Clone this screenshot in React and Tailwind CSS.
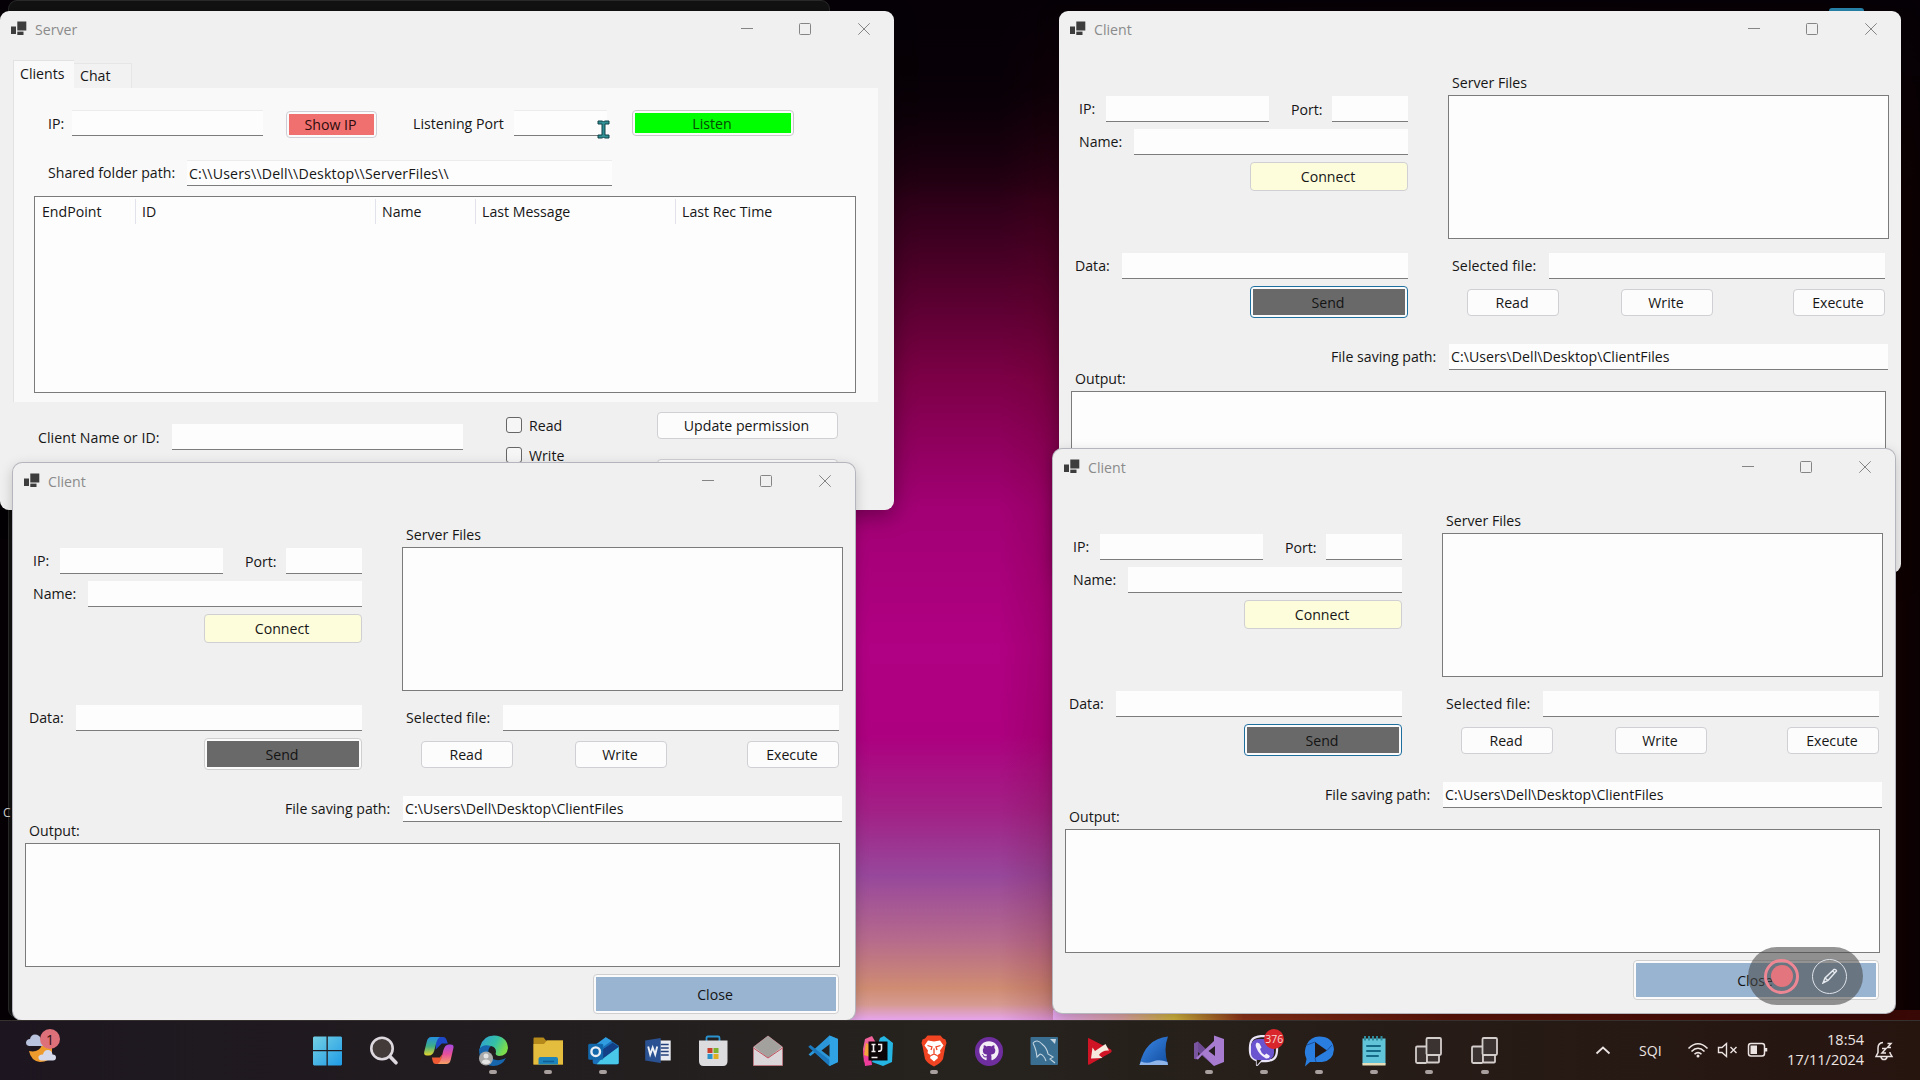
import React from "react";
import { FaGithub, FaViber } from "react-icons/fa";

const FormIcon = () => (
  <svg width="16" height="15" viewBox="0 0 16 15" className="shrink-0">
    <rect x="0" y="5.5" width="5" height="7.5" fill="#3d3d3d" />
    <rect x="6.3" y="0.5" width="9" height="9" fill="#3d3d3d" />
    <rect x="6.3" y="10.6" width="6.2" height="3.4" fill="#3d3d3d" />
  </svg>
);

const TitleBar = ({ title }) => (
  <div className="flex h-[36px] shrink-0 items-start pt-[10px] pl-[11px] pr-[24px]">
    <FormIcon />
    <span className="-mt-px ml-[8px] flex-1 leading-[19px] text-[#8b8b8b]">{title}</span>
    <svg width="129" height="12" viewBox="0 0 129 12" className="mt-[2px] shrink-0" fill="none" stroke="#858585" strokeWidth="1">
      <path d="M0 5.5H12" />
      <rect x="58.5" y="0.5" width="11" height="11" rx="1" />
      <path d="M117.3 0.3L128.7 11.7M128.7 0.3L117.3 11.7" />
    </svg>
  </div>
);

const Field = ({ className, children }) => (
  <div className={"flex h-[26px] shrink-0 items-center border-b border-[#7c7c7c] bg-[#fdfdfd] pl-[2px] tracking-[0.03px] whitespace-pre " + className}>{children}</div>
);

const Btn = ({ className, children }) => (
  <div className={"flex shrink-0 items-center justify-center rounded-[4px] border border-[#cfcfd4] pr-[2px] " + className}>{children}</div>
);

const FilledBtn = ({ className, fill, children }) => (
  <div className={"flex shrink-0 rounded-[4px] border bg-[#fbfbfb] p-[2px] " + className}>
    <div className={"flex flex-1 items-center justify-center pr-[2px] " + fill}>{children}</div>
  </div>
);

const frame = "absolute flex flex-col overflow-hidden rounded-[9px] bg-[#f0f0f0] ";

function Client({ className, focused, tail }) {
  return (
    <div className={frame + "w-[842px] " + className}>
      <TitleBar title="Client" />
      <div className="flex">
        <div className="flex w-[349px] shrink-0 flex-col pt-[49px]">
          <div className="flex h-[26px] items-center">
            <span className="ml-[20px] w-[27px] pb-[2px]">IP:</span>
            <Field className="w-[163px]" />
            <span className="ml-[22px] w-[41px]">Port:</span>
            <Field className="w-[76px]" />
          </div>
          <div className="mt-[7px] flex h-[26px] items-center">
            <span className="ml-[20px] w-[55px] pb-[2px]">Name:</span>
            <Field className="w-[274px]" />
          </div>
          <Btn className="mt-[7px] ml-auto h-[29px] w-[158px] bg-[#fdfddc]">Connect</Btn>
          <div className="mt-[62px] flex h-[26px] items-center">
            <span className="ml-[16px] w-[47px] pb-[2px]">Data:</span>
            <Field className="w-[286px]" />
          </div>
          <FilledBtn className={"mt-[7px] ml-auto h-[32px] w-[158px] " + (focused ? "border-[#1f6f9f]" : "border-[#cfcfcf]")} fill="bg-[#696969] text-[#141414]">Send</FilledBtn>
        </div>
        <div className="ml-[40px] flex w-[441px] flex-col pt-[27px]">
          <span className="ml-[4px] leading-[18px]">Server Files</span>
          <div className="mt-[3px] h-[144px] border border-[#7b7b7b] bg-[#fdfdfd]" />
          <div className="mt-[14px] flex h-[26px] items-center">
            <span className="ml-[4px] w-[97px] pb-[2px] tracking-[0.1px]">Selected file:</span>
            <Field className="w-[336px]" />
          </div>
          <div className="mt-[10px] flex h-[27px]">
            <Btn className="ml-[19px] w-[92px] bg-[#fcfcfc]">Read</Btn>
            <Btn className="ml-[62px] w-[92px] bg-[#fcfcfc]">Write</Btn>
            <Btn className="ml-[80px] w-[92px] bg-[#fcfcfc]">Execute</Btn>
          </div>
        </div>
      </div>
      <div className="mt-[26px] flex h-[26px] shrink-0 items-center">
        <span className="ml-[272px] w-[118px] pb-[2px]">File saving path:</span>
        <Field className="w-[439px]">C:\Users\Dell\Desktop\ClientFiles</Field>
      </div>
      <span className="ml-[16px] leading-[18px]">Output:</span>
      <div className="mt-[3px] ml-[12px] h-[124px] w-[815px] shrink-0 border border-[#7b7b7b] bg-[#fdfdfd]" />
      {tail && (
        <FilledBtn className="mt-[7px] ml-[580px] h-[40px] w-[246px] border-[#cfcfcf]" fill="bg-[#99b4d1] text-[#141414]">Close</FilledBtn>
      )}
    </div>
  );
}

const Check = ({ children, className }) => (
  <div className={"flex h-[16px] items-center " + className}>
    <div className="h-[16px] w-[16px] rounded-[3px] border border-[#666] bg-[#f6f6f6]" />
    <span className="ml-[7px] pt-px leading-[16px]">{children}</span>
  </div>
);

function Server() {
  return (
    <div className={frame + "top-[11px] left-0 h-[499px] w-[894px] shadow-[0_6px_22px_rgba(0,0,0,0.350)]"}>
      <TitleBar title="Server" />
      <div className="mt-[13px] ml-[13px] flex h-[28px] shrink-0 items-end">
        <div className="flex h-[28px] w-[61px] items-start border-t border-l border-[#e2e2e2] bg-[#f9f9f9] pt-[3px] pl-[6px]">Clients</div>
        <div className="flex h-[25px] w-[58px] items-start border-t border-r border-[#e6e6e6] bg-[#f2f2f2] pt-[2px] pl-[6px]">Chat</div>
      </div>
      <div className="ml-[13px] flex h-[314px] w-[865px] shrink-0 flex-col border-l border-[#e2e2e2] bg-[#f9f9f9] pt-[22px]">
        <div className="flex h-[27px] items-start">
          <span className="ml-[34px] w-[24px] pt-[4px]">IP:</span>
          <Field className="w-[191px] border-t border-t-[#ececec]" />
          <FilledBtn className="mt-px ml-[23px] h-[27px] w-[91px] border-[#cfcfd8]" fill="bg-[#f07070] text-[#2c0c0c]">Show IP</FilledBtn>
          <span className="ml-[36px] w-[101px] pt-[4px]">Listening Port</span>
          <Field className="w-[93px] border-t border-t-[#ececec]" />
          <FilledBtn className="ml-[25px] h-[26px] w-[162px] border-[#c9c9c9]" fill="bg-[#00ff00] text-[#064a06]">Listen</FilledBtn>
        </div>
        <div className="mt-[23px] flex h-[26px] items-center">
          <span className="ml-[34px] w-[139px] pb-px">Shared folder path:</span>
          <Field className="w-[425px] border-t border-t-[#ececec] tracking-[0.17px]">{"C:\\\\Users\\\\Dell\\\\Desktop\\\\ServerFiles\\\\"}</Field>
        </div>
        <div className="mt-[10px] ml-[20px] h-[197px] w-[822px] shrink-0 border border-[#7b7b7b] bg-[#fdfdfd]">
          <div className="mt-[2px] flex h-[25px] leading-[25px]">
            <span className="w-[101px] border-r border-[#e2e2ea] pl-[7px]">EndPoint</span>
            <span className="w-[240px] border-r border-[#e2e2ea] pl-[6px]">ID</span>
            <span className="w-[100px] border-r border-[#e2e2ea] pl-[6px]">Name</span>
            <span className="w-[200px] border-r border-[#e2e2ea] pl-[6px]">Last Message</span>
            <span className="pl-[6px]">Last Rec Time</span>
          </div>
        </div>
      </div>
      <div className="flex">
        <div className="mt-[22px] flex h-[26px] items-center">
          <span className="ml-[38px] w-[134px] tracking-[0.06px]">Client Name or ID:</span>
          <Field className="w-[291px]" />
        </div>
        <div className="ml-[43px] w-[151px] pt-[15px]">
          <Check>Read</Check>
          <Check className="mt-[14px]">Write</Check>
        </div>
        <div className="pt-[10px]">
          <Btn className="h-[27px] w-[181px] bg-[#fcfcfc]">Update permission</Btn>
          <Btn className="mt-[20px] h-[27px] w-[181px] bg-[#fcfcfc]" />
        </div>
      </div>
    </div>
  );
}

const Svg = ({ children }) => (
  <svg width="32" height="32" viewBox="0 0 32 32" fill="none">{children}</svg>
);

const FormsTask = () => (
  <Svg>
    <g stroke="#d3cdcb" strokeWidth="1.8" fill="#3a3331">
      <rect x="3" y="11.5" width="11" height="16.5" rx="1.2" />
      <rect x="13.5" y="3" width="14.5" height="17" rx="1.2" />
      <rect x="14" y="20" width="12" height="7.5" rx="1" />
    </g>
  </Svg>
);

const apps = [
  ["start", <Svg><defs><linearGradient id="wn" x1="0" y1="0" x2="1" y2="1"><stop offset="0" stopColor="#74d0e4" /><stop offset="1" stopColor="#1f9be6" /></linearGradient></defs>
    <path fill="url(#wn)" d="M2 1.500H14.500V15H1V2.500ZM15.800 1.500H29L30 2.500V15H15.800ZM1 16.300H14.500V30.500H2L1 29.500ZM15.800 16.300H30V29.500L29 30.500H15.800Z" /></Svg>],
  ["search", <Svg><circle cx="15" cy="13.5" r="10.7" fill="#423b3a" stroke="#ddd8de" strokeWidth="2.6" /><path d="M23 21.5L29 27.8" stroke="#ddd8de" strokeWidth="3.6" strokeLinecap="round" /></Svg>],
  ["copilot", <Svg><defs>
    <linearGradient id="c1" x1="0" y1="0" x2="0" y2="1"><stop offset="0" stopColor="#2590e0" /><stop offset="0.5" stopColor="#3fae86" /><stop offset="1" stopColor="#e4d52a" /></linearGradient>
    <linearGradient id="c2" x1="0" y1="0" x2="0" y2="1"><stop offset="0" stopColor="#a54ae0" /><stop offset="0.5" stopColor="#e8509a" /><stop offset="1" stopColor="#f5a165" /></linearGradient></defs>
    <g transform="translate(0.8 -0.5)">
    <path d="M13 2.5H20.5Q23 2.5 24 6L25 9H19L13 15Z" fill="#1d48c8" />
    <path d="M9 23H17L19 20V29.5H13Q10.500 29.500 10 27Z" fill="#ee5a34" />
    <path d="M8.500 2.500H17Q14.500 4 13.500 8L11.500 16Q10 21 6 21H4Q0.500 21 1.500 17L4 7Q5 2.500 8.500 2.500Z" fill="url(#c1)" />
    <path d="M23.500 29.500H15Q17.500 28 18.500 24L20.500 16Q22 10 26 10H28Q31.500 10 30.500 14L28 25Q27 29.500 23.500 29.500Z" fill="url(#c2)" />
    </g></Svg>],
  ["edge", <Svg><defs><linearGradient id="eg" x1="0" y1="0" x2="1" y2="0.4"><stop offset="0" stopColor="#2f9fd8" /><stop offset="0.6" stopColor="#35c1a4" /><stop offset="1" stopColor="#7bdc4c" /></linearGradient></defs>
    <path d="M3 12Q6 0.500 17 0.500Q30 1 31 13Q30 21 22 21Q17.500 20.500 19 17Q19 12 14 11Q7 10 3 17Z" fill="url(#eg)" />
    <path d="M2 14Q6 8.500 14 11Q10 14 12 20Q15 26 23 25Q26 24.500 29 23Q25 31 16 31Q2 30 2 14Z" fill="#1766ad" />
    <circle cx="9" cy="23.500" r="7" fill="#a9a9a9" /><circle cx="9" cy="21" r="2.500" fill="#e4e4e4" /><path d="M4.500 27.500Q5.500 24.500 9 24.500T13.500 27.500Q9 31 4.500 27.500Z" fill="#e4e4e4" /></Svg>],
  ["files", <Svg><path d="M1.500 3.500Q1.500 2.500 2.500 2.500H11.500L14 5.500H31V29.500H1.500Z" fill="#b58a1a" /><path d="M1.500 9H12L15 5.500H31V29.500H1.500Z" fill="#e5bd3e" /><path d="M6.500 29.500V24Q6.500 22 8.500 22H24Q26 22 26 24V29.500Z" fill="#1d83bb" /><path d="M11 26.500H22" stroke="#0d5f94" strokeWidth="1.500" /></Svg>],
  ["outlook", <Svg><g transform="translate(0.7 -0.3)"><path d="M5 12L18 2.500L31 11V28Q31 29.500 29 29.500H8Q5 29.500 5 27Z" fill="#1a6fb8" /><path d="M8 10L18 2.500L24 6L10 16Z" fill="#2f9de0" /><path d="M14 24L31 12V28Q31 29.500 29 29.500H9Z" fill="#49c8ea" /><path d="M10 18L25 8L31 12L15 24Z" fill="#123f86" /><rect x="0.500" y="9" width="15" height="16" rx="1.500" fill="#1267ab" /><circle cx="8" cy="17" r="4.300" stroke="#e9eef4" strokeWidth="2.400" /></g></Svg>],
  ["word", <Svg><g transform="translate(0.7 -0.5)"><rect x="12" y="6" width="16" height="20" fill="#e8ebf1" /><path d="M18 10H26M18 13.500H26M18 17H26M18 20.500H26" stroke="#23407a" strokeWidth="1.600" /><path d="M2.500 6L18 3.500V28.500L2.500 26Z" fill="#2a5293" /><path d="M5.500 12L7.500 20L10 13L12.500 20L14.500 12" stroke="#eef1f6" strokeWidth="1.900" /></g></Svg>],
  ["store", <Svg><path d="M9.500 8V3Q9.500 1.500 11 1.500H21Q22.500 1.500 22.500 3V8" stroke="#2a93d0" strokeWidth="1.800" /><path d="M2 5.500H30.500V26Q30.500 31 26 31H6.500Q2 31 2 26Z" fill="#dcdcdf" /><rect x="10.500" y="13" width="5" height="5" fill="#c8402c" /><rect x="16.500" y="13" width="5" height="5" fill="#7cb02f" /><rect x="10.500" y="19" width="5" height="5" fill="#2b93c9" /><rect x="16.500" y="19" width="5" height="5" fill="#dfae22" /></Svg>],
  ["mail", <Svg><path d="M1.500 12L16 1L30.500 12V30.500H1.500Z" fill="#dbd6d9" stroke="#c77a84" strokeWidth="0.800" /><path d="M2 12L16 1L30 12L16 23Z" fill="#a3a19e" /><path d="M1.500 13L16 23L30.500 13" stroke="#c2525f" strokeWidth="1" /></Svg>],
  ["code", <Svg><path d="M22.500 0.500L31 4V27L22.500 31L8 17.500L3.500 21L1.500 19.500L22.500 0.500Z" fill="#2b97d8" /><path d="M1.500 11.500L3.500 10L22.500 25V31L1.500 12Z" fill="#1c79bd" /><path d="M23 9V22L14.500 15.500Z" fill="#23211f" /><path d="M22.500 0.500L31 4V27L22.500 31Z" fill="#2fa3e3" /></Svg>],
  ["idea", <Svg><path d="M3 4L10 1L14 8L8 14L2 28L1 14Z" fill="#f0609a" /><path d="M1 16L8 14L10 30L3 31Z" fill="#ee3c9b" /><path d="M4 8L8 10V22L2 20Z" fill="#f3a43c" /><path d="M18 3L22 1L31 8L30 27L21 31L10 27Z" fill="#25b6e4" /><rect x="6.500" y="6.500" width="19" height="19" fill="#0b0508" /><path d="M9.500 9.500H13.500M11.500 9.500V16.500M9.500 16.500H13.500M16 9.500H19.500V14Q19.500 16.500 16 16.200M9.500 22.500H15.500" stroke="#f2eef0" strokeWidth="1.600" /></Svg>],
  ["brave", <Svg><path d="M9.500 0.500H22.500L25 3.500L27.500 4.500L28.500 8L27.500 11L25 24Q23 28 16 31.500Q9 28 7 24L4.500 11L3.500 8L4.500 4.500L7 3.500Z" fill="#f04423" /><path d="M10 5.500L16 6.500L22 5.500L25.500 10.500L22 15.500L22.500 18L19 20.500L20 23L16 26.500L12 23L13 20.500L9.500 18L10 15.500L6.500 10.500Z" fill="#fff" /><path d="M9.500 10.500L14 12L13 15M22.500 10.500L18 12L19 15M16 13.500V19M13 20.500L16 19L19 20.500" stroke="#f04423" strokeWidth="1.300" /></Svg>],
  ["github", <div className="flex h-[29px] w-[28px] items-center justify-center rounded-full bg-[#6e2e9e]"><FaGithub size={20} color="#f3eef6" /></div>],
  ["mysql", <Svg><rect x="2.500" y="2" width="27.500" height="28" rx="1" fill="#3b6f92" /><path d="M5 8Q9 3.500 14 9Q19 13 20 19L25 22L22 24L27 28M5 8Q7 12 8 16L9 22L12 19Q16 20 18 26" stroke="#c3d5e0" strokeWidth="1.100" /><path d="M22 4L27 9L28 4" fill="#c3d5e0" /></Svg>],
  ["anydesk", <Svg><path d="M5 4Q5 2.500 6.500 3.500L28 14.500Q29.500 16 28 17.500L6.500 29.500Q5 30.500 5 28.500Z" fill="#cf1426" /><path d="M22.500 9L12 16L9.500 12.500L8 23.500L19.500 23L16 20Q19 15 26 15.500Z" fill="#f5ecdf" /></Svg>],
  ["wireshark", <Svg><defs><linearGradient id="ws" x1="0" y1="0" x2="1" y2="1"><stop offset="0" stopColor="#3d8bea" /><stop offset="1" stopColor="#114c9e" /></linearGradient></defs><path d="M1.500 30Q7 4 30 1.500Q25 14 30 30Z" fill="url(#ws)" /><path d="M1.500 30L3 26.500Q9 29 15 26.500T29.500 27L30 30Z" fill="#8eb4e8" /></Svg>],
  ["vs", <Svg><path d="M1 8.500L5 6.500L22 23V30.500L20 30L5 17V21L8 18L3 24.500L1 23.500Z" fill="#6d4a93" /><path d="M1 8.500L5 6.500V24.500L1 23.500Z" fill="#7a559f" /><path d="M21 0.500L31 4V27L21 31L9.500 19.500L5 24.500L3 23L21 6Z" fill="#a77bd0" /><path d="M22 11V21L15.500 16Z" fill="#241c20" /></Svg>],
  ["viber", <div className="relative h-[32px] w-[32px]"><FaViber size={31} color="#e9e4f6" className="absolute inset-0" /><div className="absolute top-[4px] left-[3px] h-[21px] w-[23px] rounded-[7px] bg-[#6a54d0]" /><svg className="absolute inset-0" width="32" height="32" viewBox="0 0 32 32"><path d="M9 7.500Q7 9 8 12Q11 20 18 23.500Q21 24 22 21L18.500 18.500L16.500 20Q13 18 12 14L13.500 12.500L11.500 8.500Z" fill="#f3effb" /></svg><div className="absolute -top-[6px] left-[16px] flex h-[20px] w-[20px] items-center justify-center rounded-full bg-[#d9262c] text-[10.500px] leading-none text-[#f5dcd8]">376</div></div>],
  ["recorder", <Svg><path d="M16 1.500Q30 1.500 31 14.500Q30 26 19 27L7 27L2 31.500L3.500 24Q0 17 4 9Q8 1.500 16 1.500Z" fill="#2a7ee0" /><path d="M12 7L24 15.500L12 23Z" fill="#241815" /><path d="M12 7L4 10M12 23L13 27M24 15.500L29 10" stroke="#1b4f9c" strokeWidth="1" /></Svg>],
  ["notepad", <Svg><rect x="4.500" y="3.500" width="23" height="26" fill="#62c4d8" /><rect x="4.500" y="28" width="23" height="2.500" fill="#e9ddb8" /><path d="M7 1V5.500M11 1V5.500M15 1V5.500M19 1V5.500M23.500 1V5.500" stroke="#2e8b9c" strokeWidth="2" /><path d="M9 11H22M9 16H22M9 21H20" stroke="#146a86" strokeWidth="2" strokeLinecap="round" /></Svg>],
  ["form1", <FormsTask />],
  ["form2", <FormsTask />],
];
const running = ["edge", "files", "outlook", "brave", "vs", "viber", "recorder", "notepad", "form1", "form2"];

function Taskbar() {
  return (
    <div className="absolute top-[1020px] left-0 flex h-[60px] w-[1920px] border-t border-[#36302e] bg-linear-to-r from-[#1d1620] via-[#26231e] to-[#26140f] text-[#ece4e2]">
      <div className="flex w-[300px] shrink-0 pt-[7px] pl-[25px]">
        <svg width="36" height="36" viewBox="0 0 36 36">
          <path d="M4 23Q14 25 17 17Q19 12 27 12V26Q25 34 15 34Q6 33 4 23Z" fill="#ee9b2e" />
          <path d="M4 18Q1 17.500 1 14.500Q1.500 11 5 11Q6 6.500 10 6.500Q14.500 6.500 16 11Q20 11.500 19 18Z" fill="#b9c3dd" />
          <path d="M16 32.500Q13 31.500 13.500 28.500Q15 26 18 26.500Q19 21.500 23.500 22Q27 22.500 27.500 26.500Q31 26.500 31 29.500Q31 32.500 28 32.500Z" fill="#d5d9ea" />
          <circle cx="25" cy="11" r="10" fill="#dd7078" />
          <text x="25" y="16.500" textAnchor="middle" fontSize="14" fill="#2c1010">1</text>
        </svg>
      </div>
      <div className="flex">
        {apps.map(([name, icon]) => (
          <div key={name} className="flex w-[55.100px] flex-col items-center pt-[14px]">
            <div className="flex h-[32px] items-center">{icon}</div>
            {running.includes(name) && <div className="mt-[3px] h-[4px] w-[8px] rounded-full bg-[#a89f9f]" />}
          </div>
        ))}
      </div>
      <div className="ml-[83px] flex items-start pt-[20px]">
        <svg width="16" height="16" viewBox="0 0 16 16" fill="none" stroke="#ece4e2" strokeWidth="1.800" className="mt-[3px]"><path d="M1.500 9.500L8 3.500L14.500 9.500" /></svg>
        <span className="mt-[1px] ml-[28px] w-[48px] leading-[18px]">SQI</span>
        <svg width="22" height="18" viewBox="0 0 22 18" fill="none" stroke="#ece4e2" strokeWidth="1.600"><path d="M1.500 7.500Q11 -2 20.500 7.500M4.500 10.500Q11 4 17.500 10.500M7.500 13.300Q11 9.800 14.500 13.300" /><circle cx="11" cy="15" r="1.500" fill="#ece4e2" stroke="none" /></svg>
        <svg width="22" height="18" viewBox="0 0 22 18" fill="none" stroke="#ece4e2" strokeWidth="1.400" className="ml-[8px]"><path d="M1.500 6.500H5L9.500 2.500V15.500L5 11.500H1.500ZM13.500 6L19.500 12M19.500 6L13.500 12" /></svg>
        <svg width="22" height="18" viewBox="0 0 22 18" fill="none" stroke="#ece4e2" strokeWidth="1.500" className="ml-[8px]"><rect x="1.500" y="2.500" width="16" height="12.500" rx="2.500" /><rect x="3.500" y="4.500" width="6.500" height="8.500" fill="#ece4e2" stroke="none" /><path d="M19 7V10.500" strokeWidth="2.500" /></svg>
        <div className="-mt-[11px] ml-[13px] w-[82px] text-right text-[14.500px] leading-[20px]">18:54<br />17/11/2024</div>
        <svg width="20" height="20" viewBox="0 0 20 20" fill="none" stroke="#ece4e2" strokeWidth="1.500" className="ml-[10px]"><path d="M9 1.500Q4 2 4 7V11.500L2 15.500H18L16 12V11M7 16Q7.500 18.500 10 18.500T13 16M8 7.500H12L8 12H12M13.500 2.500H17L13.500 6.500H17" /></svg>
      </div>
    </div>
  );
}

export default function App() {
  return (
    <div className='relative h-[1080px] w-[1920px] overflow-hidden bg-[#050005] font-["Open_Sans",sans-serif] text-[14.150px] leading-[19px] whitespace-nowrap text-[#161616]'>
      <div className="absolute inset-0 bg-[linear-gradient(180deg,#060006_0%,#0a0006_8%,#260014_17%,#4c0028_25%,#7c0046_35%,#a20074_47%,#b00083_60%,#ad0080_68%,#a22086_75%,#97479b_81%,#b66a8c_87%,#cf8c72_91.500%,#d69a90_93%,#e6a5f0_94.500%)]" />
      <div className="absolute inset-0 bg-[linear-gradient(90deg,#050005_0%,#050005_2%,transparent_10%,transparent_52%,#60001a33_55%,#400008dd_75%,#1c0002_97%,#0a0002_100%)]" />
      <div className="absolute top-0 left-0 h-[200px] w-[1920px] bg-[linear-gradient(180deg,#060006,transparent)]" />
      <div className="absolute top-[1010px] left-[1053px] h-[10px] w-[867px] bg-[linear-gradient(90deg,#e2a4ea_0%,#d9a0a0_8%,#cdb03c_14%,#8a3018_22%,#5c1408_45%,#380806_100%)]" />
      <div className="absolute top-0 left-[8px] h-[1018px] w-[822px] rounded-[9px] border border-[#2a2a2a] bg-[#121212]" />
      <div className="absolute top-[803px] left-[3px] text-[12px] text-[#d0d0d0]">C</div>
      <div className="absolute top-[8px] left-[1829px] h-[8px] w-[35px] rounded-t-[3px] bg-[#2a8bb5]" />
      <Client className="top-[11px] left-[1059px] h-[562px] shadow-[0_6px_22px_rgba(0,0,0,0.350)]" focused />
      <Client className="top-[449px] left-[1053px] h-[564px] shadow-[0_0_0_1px_#b5b5bd,0_4px_14px_rgba(0,0,0,0.220)]" focused tail />
      <Server />
      <Client className="top-[463px] left-[13px] h-[557px] shadow-[0_0_0_1px_#b5b5bd,0_4px_14px_rgba(0,0,0,0.220)]" tail />
      <div className="absolute top-[947px] left-[1748px] flex h-[58px] w-[115px] items-center gap-[13px] rounded-full bg-[rgba(73,73,73,0.580)] pl-[16px]">
        <div className="flex h-[35px] w-[35px] items-center justify-center rounded-full border-[3px] border-[#ee8794]">
          <div className="h-[22px] w-[22px] rounded-full bg-[#e2757d]" />
        </div>
        <div className="flex h-[35px] w-[35px] items-center justify-center rounded-full border-[1.500px] border-[#dde3ea]">
          <svg width="16" height="16" viewBox="0 0 16 16" fill="none" stroke="#e6ebf0" strokeWidth="1.400"><path d="M1 15L3 10L12 1.500Q14 1 14.500 3L6 12.500ZM3 10L6 12.500M10.500 3L13 5" /></svg>
        </div>
      </div>
      <svg className="absolute top-[120px] left-[597px]" width="13" height="19" viewBox="0 0 13 19"><path d="M1 1H5.500L6.500 2L7.500 1H12V4H8V15H12V18H7.500L6.500 17L5.500 18H1V15H5V4H1Z" fill="#2f8f93" stroke="#0e4048" strokeWidth="1" /></svg>
      <Taskbar />
    </div>
  );
}
